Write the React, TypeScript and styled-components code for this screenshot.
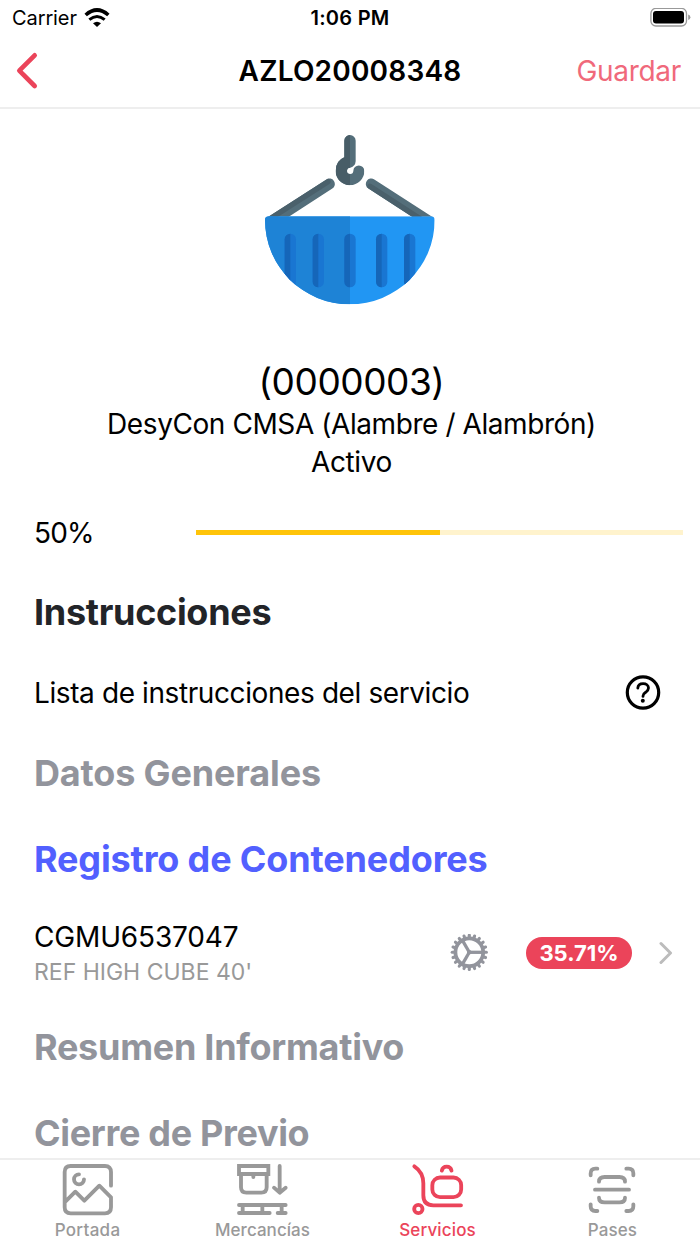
import React from "react";
import styled, { createGlobalStyle } from "styled-components";

const color = {
  accent: "#eb445a",
  accentSoft: "#f0697b",
  muted: "#92949c",
  tab: "#999999",
  line: "#eeeeee",
  warning: "#ffc409",
};

const GlobalStyle = createGlobalStyle`
  * { box-sizing: border-box; }
  body {
    margin: 0;
    background: #fff;
    color: #000;
    font-family: Inter, "Liberation Sans", sans-serif;
    -webkit-font-smoothing: antialiased;
  }
`;

const Screen = styled.div`
  width: 700px;
  height: 1244px;
  display: flex;
  flex-direction: column;
  overflow: hidden;
`;

const Label = styled.span<{ $size: number; $weight?: number; $track?: number; $color?: string }>`
  font-size: ${(p) => p.$size}px;
  font-weight: ${(p) => p.$weight ?? 400};
  letter-spacing: ${(p) => p.$track ?? 0}px;
  color: ${(p) => p.$color ?? "#000"};
  white-space: nowrap;
`;

const StatusBar = styled.div`
  height: 36px;
  flex: none;
  display: grid;
  grid-template-columns: 1fr auto 1fr;
  align-items: center;
  padding: 0 9px;
`;

const StatusLeft = styled.div`
  display: flex;
  align-items: center;
  gap: 7px;
  padding-left: 3px;
`;

const StatusRight = styled.div`
  display: flex;
  justify-content: flex-end;
`;

const NavBar = styled.header`
  height: 73px;
  flex: none;
  display: grid;
  grid-template-columns: 1fr auto 1fr;
  align-items: center;
  padding: 0 15px 1px;
  border-bottom: 2px solid ${color.line};
`;

const NavAction = styled.button`
  border: 0;
  padding: 0 4px 0 0;
  background: none;
  font-family: inherit;
  display: flex;
  justify-self: end;
`;

const BackButton = styled(NavAction)`
  padding: 0;
  justify-self: start;
`;

const Content = styled.main`
  flex: 1;
  min-height: 0;
  overflow: hidden;
`;

const Hero = styled.section`
  display: flex;
  flex-direction: column;
  align-items: center;
  padding-top: 26px;
`;

const HeroLine = styled.div<{ $h: number; $mt?: number }>`
  height: ${(p) => p.$h}px;
  margin-top: ${(p) => p.$mt ?? 0}px;
  padding-left: 3px;
  display: flex;
  align-items: center;
`;

const ProgressRow = styled.div`
  height: 60px;
  margin-top: 22px;
  padding: 0 17px 0 34px;
  display: grid;
  grid-template-columns: 162px 1fr;
  align-items: center;
`;

const Track = styled.div`
  height: 5px;
  margin-bottom: 1px;
  background: #fff3cd;
`;

const Fill = styled.div`
  height: 100%;
  background: ${color.warning};
`;

const Heading = styled.h2<{ $color: string; $track?: number }>`
  height: 86.5px;
  margin: 0;
  padding-left: 34px;
  display: flex;
  align-items: center;
  font-size: 36px;
  font-weight: 700;
  letter-spacing: ${(p) => p.$track ?? 0}px;
  color: ${(p) => p.$color};
  white-space: nowrap;
`;

const Sections = styled.div`
  padding-top: 6px;
`;

const Row = styled.div<{ $h: number; $pr: number }>`
  height: ${(p) => p.$h}px;
  padding: 0 ${(p) => p.$pr}px 0 34px;
  display: flex;
  align-items: center;
  justify-content: space-between;
`;

const ItemText = styled.div`
  display: flex;
  flex-direction: column;
  line-height: 35px;
  padding-top: 3px;
`;

const ItemMeta = styled.div`
  display: flex;
  align-items: center;
`;

const Badge = styled.span`
  width: 106px;
  height: 32px;
  margin: 0 27px 0 38px;
  border-radius: 16px;
  background: ${color.accent};
  display: flex;
  align-items: center;
  justify-content: center;
`;

const TabBar = styled.nav`
  height: 86px;
  flex: none;
  display: grid;
  grid-template-columns: repeat(4, 1fr);
  border-top: 2px solid ${color.line};
`;

const Tab = styled.a<{ $active?: boolean }>`
  display: flex;
  flex-direction: column;
  align-items: center;
  padding-top: 1px;
  color: ${(p) => (p.$active ? color.accent : color.tab)};
`;

const TabLabel = styled.span<{ $track: number }>`
  font-size: 17px;
  font-weight: 500;
  line-height: 24px;
  letter-spacing: ${(p) => p.$track}px;
`;

const TabGlyph = ({ x, children }: { x: number; children: React.ReactNode }) => (
  <svg
    width="55"
    height="57"
    viewBox={`${x} 18 165 171`}
    fill="none"
    stroke="currentColor"
    strokeWidth="11.500"
    strokeLinecap="round"
    strokeLinejoin="round"
  >
    {children}
  </svg>
);

const tabs = [
  {
    label: "Portada",
    track: 0.3,
    x: 60,
    glyph: (
      <>
        <path d="M213 92V51Q213 33 195 33H92Q74 33 74 51V157Q74 175 92 175H195Q213 175 213 157V127L178 92L133 137L106 110L76 140" />
        <path d="M117 58A15 15 0 1 0 132 73" />
      </>
    ),
  },
  {
    label: "Mercancías",
    track: 0.05,
    x: 585,
    glyph: (
      <>
        <path d="M597 33H685V57H597Z" strokeLinejoin="miter" />
        <path d="M603 60V97Q603 113 619 113H664Q680 113 680 97V60M640 60V66" />
        <path d="M719 33V112M702 98L719 113L737 98" />
        <path d="M597 150H737M608 152V174M667 152V174M725 152V174M597 174H689M713 174H737" />
      </>
    ),
  },
  {
    label: "Servicios",
    track: 0.15,
    x: 90,
    active: true,
    glyph: (
      <>
        <path d="M103 34Q130 52 130 85V121Q130 151 160 151H243" />
        <circle cx="115" cy="162" r="12.500" />
        <rect x="157" y="67.500" width="86.500" height="59" rx="23" />
        <path d="M185.500 47Q188 35 200 35Q212 35 214.500 47" />
      </>
    ),
  },
  {
    label: "Pases",
    track: 0.1,
    x: 615,
    glyph: (
      <>
        <path d="M632 61V55Q632 41 646 41H652M739 41H746Q760 41 760 55V61M632 148V154Q632 168 646 168H652M739 168H746Q760 168 760 154V148" />
        <path d="M657 80Q657 66 674 66H718Q735 66 735 80M645 104H747M657 128Q657 142 674 142H718Q735 142 735 128" />
      </>
    ),
  },
];

const WifiIcon = () => (
  <svg width="26" height="20" viewBox="252 21 78 60" fill="none" stroke="#000">
    <path d="M257 42Q291 12 325 42" strokeWidth="11" />
    <path d="M268 56Q291 37 314 56" strokeWidth="9" />
    <path d="M279 67Q291 57 303 67L291 78Z" fill="#000" stroke="none" />
  </svg>
);

const BatteryIcon = () => (
  <svg width="41" height="20" viewBox="0 0 41 20">
    <rect x="0.900" y="0.400" width="35.600" height="17.600" rx="5" fill="none" stroke="#999" strokeWidth="1.300" />
    <rect x="3" y="2.900" width="31" height="12.600" rx="3" />
    <path d="M38.200 6.400Q40.400 7.200 40.400 9.200T38.200 12Z" fill="#999" />
  </svg>
);

const BackIcon = () => (
  <svg width="24" height="38" viewBox="45 157 72 114" fill="none" stroke={color.accent} strokeWidth="14" strokeLinecap="round" strokeLinejoin="round">
    <path d="M104 167L58 213L104 259" />
  </svg>
);

const HelpIcon = () => (
  <svg width="36" height="36" viewBox="0 0 36 36" fill="none" stroke="#000" strokeWidth="3.200" strokeLinecap="round" strokeLinejoin="round">
    <circle cx="18" cy="17.500" r="15.700" />
    <path d="M12.800 13.200C13 10.200 15.200 8.700 18.100 8.700C21.100 8.700 23.500 10.400 23.500 13.100C23.500 15.200 22.300 16.200 20.700 17.300C19 18.400 18 19.300 18 20.900V21.400" strokeWidth="2.800" />
    <circle cx="17.800" cy="25.700" r="2" fill="#000" stroke="none" />
  </svg>
);

const GearIcon = () => (
  <svg width="38" height="38" viewBox="-19.300 -18.300 38 38" fill="none" stroke={color.muted}>
    <circle r="13.900" strokeWidth="3.800" />
    <g strokeWidth="3.100" strokeLinecap="round">
      {Array.from({ length: 20 }, (_, i) => (
        <path key={i} d="M15 0H17.100" transform={`rotate(${i * 18})`} />
      ))}
    </g>
    <g strokeWidth="3.300">
      <path d="M0 0H14" />
      <path d="M0 0H14" transform="rotate(120)" />
      <path d="M0 0H14" transform="rotate(240)" />
    </g>
    <circle r="2.200" fill={color.muted} stroke="none" />
  </svg>
);

const ChevronIcon = () => (
  <svg width="14" height="24" viewBox="0 0 14 24" fill="none" stroke="#bcbcbc" strokeWidth="3" strokeLinecap="round" strokeLinejoin="round">
    <path d="M2 2.500L11.500 12L2 21.500" />
  </svg>
);

const slots = [104, 188, 283, 378, 462];
const bowl = "M45 285Q45 274 56 274H543Q554 274 554 285A254.500 253 0 0 1 45 285Z";
const hook =
  "M283 47A17 17 0 0 1 317 47V109Q316 124 301 128A9.500 9.500 0 1 0 310 138A16.500 16.500 0 0 1 343 138A43 42.500 0 0 1 257 138Q257 107 283 97Z";

const CraneIcon = () => (
  <svg width="170" height="170" viewBox="45 30 510 510">
    <defs>
      <clipPath id="bowl"><path d={bowl} /></clipPath>
      <clipPath id="aboveBowl"><rect x="45" y="30" width="510" height="245" /></clipPath>
      <clipPath id="hook"><path d={hook} /></clipPath>
    </defs>
    <g clipPath="url(#hook)">
      <rect x="250" y="30" width="100" height="155" fill="#546e7a" />
      <rect x="250" y="30" width="50" height="155" fill="#485d67" />
    </g>
    <g clipPath="url(#aboveBowl)" strokeLinecap="round" fill="none">
      <path d="M26 314L238 177M576 314L364 177" stroke="#546e7a" strokeWidth="33" />
      <path d="M20 307L234 170M572 321L360 184" stroke="#4a606b" strokeWidth="16" />
    </g>
    <g clipPath="url(#bowl)">
      <rect x="45" y="270" width="510" height="270" fill="#2196f3" />
      <rect x="45" y="270" width="255" height="270" fill="#1e83d6" />
      {slots.map((x) => (
        <g key={x}>
          <rect x={x} y="326" width="34" height="161" rx="17" fill="#1976d2" />
          <path d={`M${x + 17} 326A17 17 0 0 0 ${x} 343V470A17 17 0 0 0 ${x + 17} 487Z`} fill="#1566b9" />
        </g>
      ))}
    </g>
  </svg>
);

export default function App() {
  const progress = 50;
  return (
    <Screen>
      <GlobalStyle />
      <StatusBar>
        <StatusLeft>
          <Label $size={20} $track={-0.1}>Carrier</Label>
          <WifiIcon />
        </StatusLeft>
        <Label $size={20} $weight={600} $track={0.25}>1:06 PM</Label>
        <StatusRight><BatteryIcon /></StatusRight>
      </StatusBar>
      <NavBar>
        <BackButton aria-label="Atrás"><BackIcon /></BackButton>
        <Label $size={28} $weight={600} $track={0.2}>AZLO20008348</Label>
        <NavAction><Label $size={28} $track={-0.3} $color={color.accentSoft}>Guardar</Label></NavAction>
      </NavBar>
      <Content>
        <Hero>
          <CraneIcon />
          <HeroLine $h={48} $mt={52}><Label $size={37} $track={-0.45}>(0000003)</Label></HeroLine>
          <HeroLine $h={38}><Label $size={28} $track={-0.42}>DesyCon CMSA (Alambre / Alambrón)</Label></HeroLine>
          <HeroLine $h={38}><Label $size={28} $track={-0.4}>Activo</Label></HeroLine>
        </Hero>
        <ProgressRow>
          <Label $size={28} $track={-0.8}>{progress}%</Label>
          <Track><Fill style={{ width: `${progress}%` }} /></Track>
        </ProgressRow>
        <Sections>
          <Heading $color="#222428" $track={-0.3}>Instrucciones</Heading>
          <Row $h={74} $pr={39}>
            <Label $size={28} $track={-0.4}>Lista de instrucciones del servicio</Label>
            <HelpIcon />
          </Row>
          <Heading $color={color.muted} $track={-0.15}>Datos Generales</Heading>
          <Heading $color="#5260ff" $track={-0.14}>Registro de Contenedores</Heading>
          <Row $h={101} $pr={27}>
            <ItemText>
              <Label $size={28} $track={-0.15}>CGMU6537047</Label>
              <Label $size={23} $track={0} $color="#999">REF HIGH CUBE 40'</Label>
            </ItemText>
            <ItemMeta>
              <GearIcon />
              <Badge><Label $size={22} $weight={700} $color="#fff">35.71%</Label></Badge>
              <ChevronIcon />
            </ItemMeta>
          </Row>
          <Heading $color={color.muted} $track={-0.27}>Resumen Informativo</Heading>
          <Heading $color={color.muted} $track={-0.32}>Cierre de Previo</Heading>
        </Sections>
      </Content>
      <TabBar>
        {tabs.map((t) => (
          <Tab key={t.label} $active={t.active}>
            <TabGlyph x={t.x}>{t.glyph}</TabGlyph>
            <TabLabel $track={t.track}>{t.label}</TabLabel>
          </Tab>
        ))}
      </TabBar>
    </Screen>
  );
}
